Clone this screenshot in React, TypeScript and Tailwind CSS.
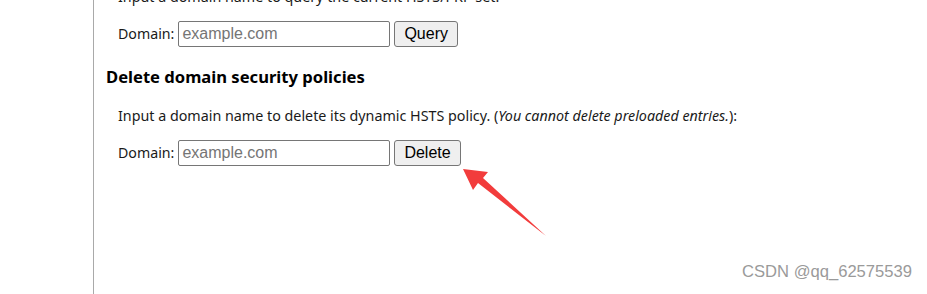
import React from 'react';

const uiFont = { fontFamily: '"Noto Sans", "Open Sans", sans-serif' };

const DomainRow: React.FC<{ action: string }> = ({ action }) => (
  <div className="flex items-center h-[26px] pl-[12px]">
    <span className="text-[14.2px] text-[#1a1a1a] mr-[4px]">Domain:</span>
    <input
      type="text"
      placeholder="example.com"
      className="w-[212px] h-[26px] border border-[#767676] rounded-[2px] px-[3px] text-[16px] placeholder:text-[#757575] bg-white outline-none"
      style={{ fontFamily: '"Liberation Sans", Arial, sans-serif' }}
    />
    <button
      className="ml-[4px] h-[26px] px-[9px] bg-[#efefef] border border-[#767676] rounded-[3px] text-[16px] text-black"
      style={{ fontFamily: '"Liberation Sans", Arial, sans-serif' }}
    >
      {action}
    </button>
  </div>
);

export default function App() {
  return (
    <div className="relative w-[927px] h-[294px] bg-white overflow-hidden" style={uiFont}>
      <div className="flex h-full">
        <div className="w-[94px] shrink-0 border-r border-[#a9a9a9]" />
        <div className="pl-[12px] text-[#1a1a1a]">
          {/* top section, scrolled half out of view */}
          <p className="mt-[-13px] h-[20px] leading-[20px] text-[14.3px] pl-[12px]">
            Input a domain name to query the current HSTS/PKP set.
          </p>
          <div className="mt-[14px]">
            <DomainRow action="Query" />
          </div>

          <h3 className="mt-[20px] h-[20px] leading-[20px] text-[16.6px] font-bold text-black">
            Delete domain security policies
          </h3>
          <p className="mt-[19px] h-[20px] leading-[20px] text-[14.3px] pl-[12px]">
            Input a domain name to delete its dynamic HSTS policy. (<i>You cannot delete preloaded entries.</i>):
          </p>
          <div className="mt-[14px]">
            <DomainRow action="Delete" />
          </div>
        </div>
      </div>

      {/* annotation arrow */}
      <svg className="absolute left-[456px] top-[162px]" width="100" height="80" viewBox="0 0 100 80">
        <path d="M7 7 L32 10 L27 16 L90 74 L22 21 L17 28 Z" fill="#f23c3c" />
      </svg>

      <div
        className="absolute right-[15px] bottom-[9px] text-[16.6px] text-[#9a9a9a]"
        style={{ fontFamily: '"Liberation Sans", Arial, sans-serif' }}
      >
        CSDN @qq_62575539
      </div>
    </div>
  );
}
